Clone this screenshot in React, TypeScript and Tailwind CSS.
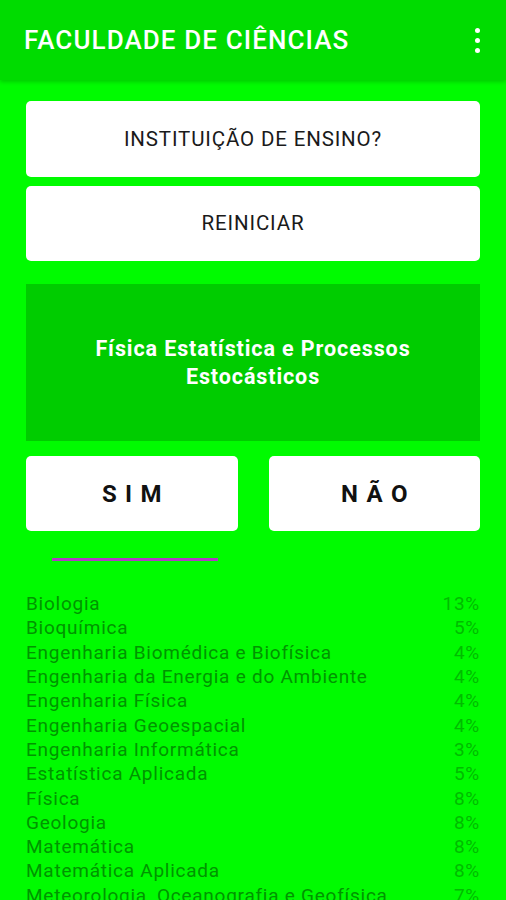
import React from "react";

const items: [string, string][] = [
  ["Biologia", "13%"],
  ["Bioquímica", "5%"],
  ["Engenharia Biomédica e Biofísica", "4%"],
  ["Engenharia da Energia e do Ambiente", "4%"],
  ["Engenharia Física", "4%"],
  ["Engenharia Geoespacial", "4%"],
  ["Engenharia Informática", "3%"],
  ["Estatística Aplicada", "5%"],
  ["Física", "8%"],
  ["Geologia", "8%"],
  ["Matemática", "8%"],
  ["Matemática Aplicada", "8%"],
  ["Meteorologia, Oceanografia e Geofísica", "7%"],
];

export default function App() {
  return (
    <div
      className="w-[506px] h-[900px] overflow-hidden bg-[#00fb00] flex flex-col"
      style={{ fontFamily: "Roboto, 'Liberation Sans', sans-serif" }}
    >
      <div className="h-[80px] shrink-0 bg-[#00dc00] flex items-center justify-between pl-[24px] pr-[26px] shadow-[0_2px_4px_rgba(0,0,0,0.18)] relative z-10">
        <span className="text-white text-[26px] font-medium tracking-[1.1px]">FACULDADE DE CIÊNCIAS</span>
        <div className="flex flex-col gap-[5px] items-center">
          <div className="w-[5px] h-[5px] rounded-full bg-white" />
          <div className="w-[5px] h-[5px] rounded-full bg-white" />
          <div className="w-[5px] h-[5px] rounded-full bg-white" />
        </div>
      </div>
      <div className="px-[26px] pt-[21px] flex flex-col">
        <div className="h-[76px] bg-white rounded-[5px] flex items-center justify-center text-[20.5px] tracking-[0.85px] text-[#1a1a1a]">
          INSTITUIÇÃO DE ENSINO?
        </div>
        <div className="mt-[9px] h-[75px] bg-white rounded-[5px] flex items-center justify-center text-[20.5px] tracking-[0.85px] text-[#1a1a1a]">
          REINICIAR
        </div>
        <div className="mt-[23px] h-[157px] bg-[#00cc00] flex items-center justify-center text-center text-white text-[21.5px] font-bold tracking-[0.9px] leading-[28px] px-[40px]">
          Física Estatística e Processos Estocásticos
        </div>
        <div className="mt-[15px] grid grid-cols-2 gap-[31px]">
          <div className="h-[75px] bg-white rounded-[5px] flex items-center justify-center text-[24px] font-bold tracking-[0.35em] text-[#111] pl-[0.35em]">
            SIM
          </div>
          <div className="h-[75px] bg-white rounded-[5px] flex items-center justify-center text-[24px] font-bold tracking-[0.35em] text-[#111] pl-[0.35em]">
            NÃO
          </div>
        </div>
        <div className="mt-[27px] ml-[26px] w-[166px] h-[3px] bg-[#b03cc4]" />
        <div className="mt-[31px] flex flex-col">
          {items.map(([name, pct]) => (
            <div key={name} className="flex justify-between h-[24.3px] items-center text-[19px] tracking-[0.75px] leading-[24px]">
              <span className="text-[#009400]">{name}</span>
              <span className="text-[#00bb00]">{pct}</span>
            </div>
          ))}
        </div>
      </div>
    </div>
  );
}
